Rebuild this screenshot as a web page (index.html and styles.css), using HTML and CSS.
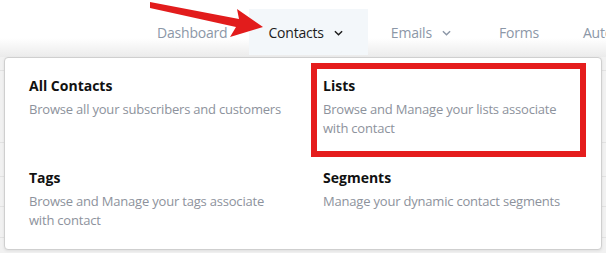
FILE: index.html
```html
<!DOCTYPE html>
<html lang="en">
<head>
<meta charset="utf-8">
<title>Contacts menu</title>
<link rel="stylesheet" href="styles.css">
</head>
<body>
<header class="topbar">
  <nav class="nav">
    <a class="nav-item">Dashboard</a>
    <a class="nav-item has-menu active">Contacts
      <svg class="chev" viewBox="0 0 10 6" width="10" height="6"><path d="M1 1l4 4 4-4" fill="none" stroke="currentColor" stroke-width="1.6"/></svg>
    </a>
    <a class="nav-item has-menu">Emails
      <svg class="chev" viewBox="0 0 10 6" width="10" height="6"><path d="M1 1l4 4 4-4" fill="none" stroke="currentColor" stroke-width="1.6"/></svg>
    </a>
    <a class="nav-item">Forms</a>
    <a class="nav-item">Automations</a>
  </nav>
</header>
<main class="page">
  <div class="row-line r1"></div>
  <div class="row-line r2"></div>
  <div class="row-line r3"></div>
  <div class="row-line r4"></div>
  <div class="row-line r5"></div>
</main>

<div class="dropdown">
  <div class="menu-item">
    <div class="menu-title">All Contacts</div>
    <div class="menu-desc">Browse all your subscribers and customers</div>
  </div>
  <div class="menu-item">
    <div class="menu-title">Lists</div>
    <div class="menu-desc">Browse and Manage your lists associate with contact</div>
  </div>
  <div class="menu-item">
    <div class="menu-title">Tags</div>
    <div class="menu-desc">Browse and Manage your tags associate with contact</div>
  </div>
  <div class="menu-item">
    <div class="menu-title">Segments</div>
    <div class="menu-desc">Manage your dynamic contact segments</div>
  </div>
</div>

<div class="highlight"></div>

<svg class="arrow" viewBox="0 0 300 45" width="300" height="45">
  <polygon points="150,2 150,8 236,27 230,37 263,27 237,9 239,19" fill="#e21c1c"/>
</svg>
</body>
</html>
```

FILE: styles.css
```css
* { box-sizing: border-box; }
html, body { margin: 0; padding: 0; }
body {
  width: 606px;
  height: 253px;
  overflow: hidden;
  position: relative;
  background: #f1f1f1;
  font-family: "Open Sans", "DejaVu Sans", sans-serif;
}
.topbar {
  height: 57px;
  background: linear-gradient(to bottom, #ffffff 0, #ffffff 38px, #ebebeb 57px);
}
.nav {
  display: flex;
  padding-left: 135px;
  padding-top: 9px;
  white-space: nowrap;
}
.nav-item {
  display: flex;
  align-items: center;
  gap: 10px;
  height: 46px;
  padding: 0 22px;
  font-size: 14px;
  letter-spacing: -0.2px;
  color: #8c97a7;
}
.nav-item.has-menu { padding: 0 26px 0 23px; }
.nav-item.active {
  background: #f3f7fa;
  color: #1c1c1c;
  padding: 0 25px 0 19px;
}
.chev { display: block; margin-top: 1px; width: 9px; }
.page {
  display: flex;
  flex-direction: column;
}
.row-line { border-bottom: 1px solid #e2e2e2; }
.r1 { height: 14px; }
.r2 { height: 72px; }
.r3 { height: 34px; }
.r4 { height: 30px; }
.r5 { height: 31px; }
.dropdown {
  position: absolute;
  left: 4px;
  top: 57px;
  width: 598px;
  height: 193px;
  background: #fff;
  border: 1px solid #cfcfcf;
  border-radius: 4px;
  box-shadow: 0 1px 3px rgba(0,0,0,0.08);
  padding: 19px 20px 0 24px;
  display: grid;
  grid-template-columns: 254px 254px;
  column-gap: 40px;
  row-gap: 31px;
  align-content: start;
}
.menu-title {
  font-size: 14px;
  line-height: 18px;
  font-weight: 700;
  color: #111;
  margin-bottom: 5px;
}
.menu-desc {
  font-size: 13px;
  line-height: 19px;
  letter-spacing: -0.2px;
  color: #8d929c;
}
.menu-item:first-child .menu-desc { white-space: nowrap; }
.highlight {
  position: absolute;
  left: 311px;
  top: 63px;
  width: 275px;
  height: 94px;
  border: 6px solid #e51d1d;
}
.arrow {
  position: absolute;
  left: 0;
  top: 0;
}
```
